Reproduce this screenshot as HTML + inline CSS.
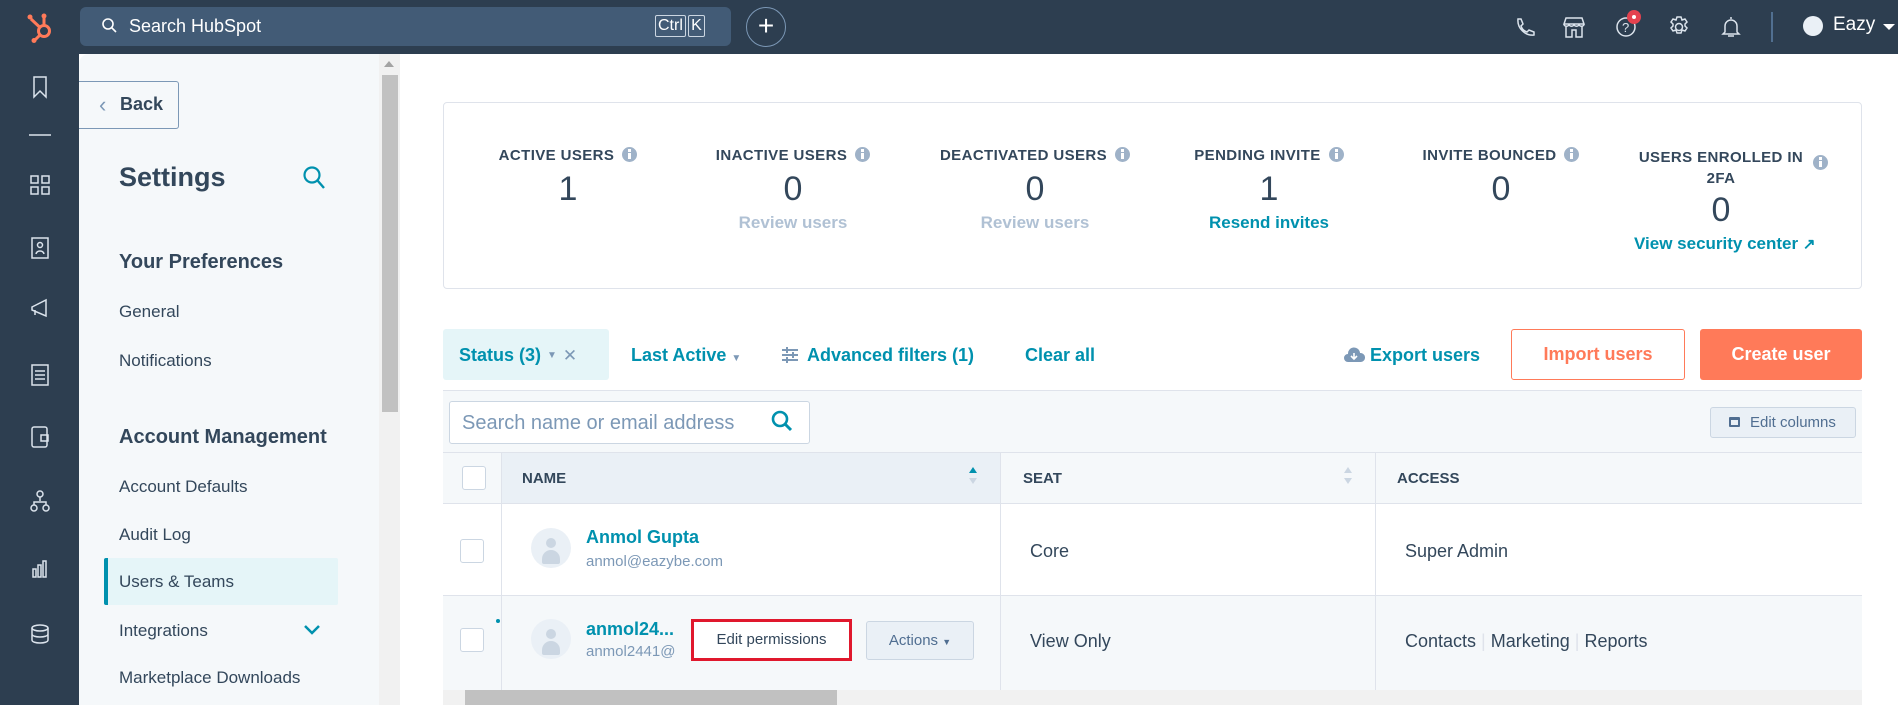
<!DOCTYPE html>
<html><head><meta charset="utf-8"><style>
*{box-sizing:border-box;margin:0;padding:0}
body{width:1898px;height:705px;overflow:hidden;background:#fff;font-family:"Liberation Sans",sans-serif;color:#33475b;position:relative}
.a{position:absolute}
.top{left:0;top:0;width:1898px;height:54px;background:#2d3e50}
.rail{left:0;top:54px;width:79px;height:651px;background:#2d3e50}
.teal{color:#0091ae}
.lbl{font-size:15px;font-weight:bold;letter-spacing:.4px;color:#33475b;white-space:nowrap}
.num{font-size:34px;color:#33475b}
.info{display:inline-block;width:15px;height:15px;border-radius:50%;background:#9fb2c8;vertical-align:-2px;margin-left:8px;position:relative}
.info:after{content:"";position:absolute;left:6px;top:6px;width:3px;height:6px;background:#fff}
.info:before{content:"";position:absolute;left:6px;top:2px;width:3px;height:3px;background:#fff}
.nav{font-size:17px;color:#33475b;left:119px}
.stat{text-align:center;width:240px}
.cb{width:24px;height:24px;border:1px solid #cbd6e2;border-radius:3px;background:#fff}
.av{width:40px;height:40px;border-radius:50%;background:#eaf0f6;overflow:hidden}
.av:before{content:"";position:absolute;left:15px;top:10px;width:10px;height:10px;border-radius:50%;background:#cbd6e2}
.av:after{content:"";position:absolute;left:11px;top:22px;width:18px;height:14px;border-radius:9px 9px 2px 2px;background:#cbd6e2}
.ic{stroke:#dbe3ec;fill:none;stroke-width:1.5}
.flt{font-size:18px;font-weight:bold;top:345px}
</style></head><body>
<div class="a top"></div>
<svg class="a" style="left:26px;top:11px" width="30" height="32" viewBox="0 0 30 32"><g stroke="#ff7a59" stroke-width="3" fill="none"><circle cx="18" cy="20" r="5.5"/><line x1="18" y1="14" x2="18" y2="7"/><line x1="13.5" y1="16" x2="5" y2="8"/><line x1="14" y1="24" x2="9" y2="29"/></g><circle cx="18" cy="5" r="2.5" fill="#ff7a59"/><circle cx="4" cy="6" r="2.5" fill="#ff7a59"/><circle cx="8" cy="29.5" r="2.5" fill="#ff7a59"/></svg>
<div class="a" style="left:80px;top:7px;width:651px;height:39px;background:#425b76;border-radius:6px"></div>
<svg class="a" style="left:101px;top:17px" width="18" height="18" viewBox="0 0 18 18"><circle cx="7" cy="7" r="5" stroke="#fff" stroke-width="1.6" fill="none"/><line x1="11" y1="11" x2="15" y2="15" stroke="#fff" stroke-width="1.6"/></svg>
<div class="a" style="left:129px;top:16px;font-size:18px;color:#fff">Search HubSpot</div>
<div class="a" style="left:655px;top:15px;height:22px;padding:0 2px;border:1px solid #cbd6e2;border-radius:2px;color:#fff;font-size:16px;line-height:20px">Ctrl</div>
<div class="a" style="left:688px;top:15px;height:22px;width:17px;border:1px solid #cbd6e2;border-radius:2px;color:#fff;font-size:16px;line-height:20px;text-align:center">K</div>
<div class="a" style="left:746px;top:7px;width:40px;height:40px;border:1px solid #7c98b6;border-radius:50%;color:#fff;font-size:28px;line-height:36px;text-align:center">+</div>
<svg class="a" style="left:1513px;top:16px" width="22" height="22" viewBox="0 0 22 22"><path class="ic" d="M5 3l3 0 2 5-2 2c1 3 3 5 6 6l2-2 5 2 0 3c-9 1-17-7-16-16z"/></svg>
<svg class="a" style="left:1563px;top:15px" width="22" height="24" viewBox="0 0 22 24"><path class="ic" d="M3 3h16l2 6H1zM1 9c0 3 5 3 5 0 0 3 5 3 5 0 0 3 5 3 5 0 0 3 5 3 5 0M3 11v11h6v-7h4v7h6V11"/></svg>
<svg class="a" style="left:1615px;top:16px" width="22" height="22" viewBox="0 0 22 22"><circle class="ic" cx="11" cy="11" r="9"/><text x="7" y="16" font-size="13" fill="#dbe3ec" font-family="Liberation Sans">?</text></svg>
<div class="a" style="left:1627px;top:10px;width:14px;height:14px;border-radius:50%;background:#e4424f"></div><div class="a" style="left:1632px;top:15px;width:4px;height:4px;border-radius:50%;background:#fff"></div>
<svg class="a" style="left:1668px;top:16px" width="22" height="22" viewBox="0 0 22 22"><circle class="ic" cx="11" cy="11" r="3.5"/><path class="ic" d="M9 1h4l1 3 3-1 2 3-2 2 0 2 2 2-2 3-3-1-1 3H9l-1-3-3 1-2-3 2-2 0-2-2-2 2-3 3 1z"/></svg>
<svg class="a" style="left:1720px;top:15px" width="22" height="24" viewBox="0 0 22 24"><path class="ic" d="M11 2v2M5 17V11a6 6 0 0112 0v6l2 2H3zM8 21h6"/></svg>
<div class="a" style="left:1771px;top:12px;width:2px;height:30px;background:#516f90"></div>
<div class="a" style="left:1803px;top:16px;width:20px;height:20px;border-radius:50%;background:#eaf0f6"></div>
<div class="a" style="left:1833px;top:14px;font-size:19px;color:#fff">Eazy</div>
<div class="a" style="left:1883px;top:24px;border:6px solid transparent;border-top:6px solid #fff"></div>
<div class="a rail"></div>
<svg class="a" style="left:27px;top:75px" width="26" height="600" viewBox="0 0 26 600"><g stroke="#dbe3ec" fill="none" stroke-width="1.5">
<path d="M7 2h12v20l-6-6-6 6z"/>
<line x1="2" y1="60" x2="24" y2="60"/>
<rect x="4" y="101" width="7" height="7"/><rect x="15" y="101" width="7" height="7"/><rect x="4" y="112" width="7" height="7"/><rect x="15" y="112" width="7" height="7"/>
<rect x="5" y="163" width="16" height="20"/><circle cx="13" cy="170" r="2.5"/><path d="M9 179c1-4 7-4 8 0"/>
<path d="M5 232l14-7v16l-14-6zM8 235v5"/>
<rect x="5" y="290" width="16" height="20"/><path d="M8 296h10M8 300h10M8 304h10"/>
<rect x="5" y="352" width="15" height="20" rx="2"/><path d="M14 360h7v6h-7z"/>
<circle cx="13" cy="419" r="3"/><circle cx="7" cy="433" r="3"/><circle cx="19" cy="433" r="3"/><path d="M13 422v4M7 430v-3h12v3"/>
<path d="M6 502v-8h3v8zM11 502v-12h3v12zM16 502v-16h3v16z"/>
<ellipse cx="13" cy="553" rx="8" ry="3"/><path d="M5 553v12c0 4 16 4 16 0V553M5 559c0 4 16 4 16 0"/>
<path d="M5 628v-10h6l2 3h8v7"/>
</g></svg>
<div class="a" style="left:79px;top:54px;width:300px;height:651px;background:#f5f8fa;border-radius:10px 0 0 0"></div>
<div class="a" style="left:379px;top:54px;width:21px;height:651px;background:#f1f1f1"></div>
<div class="a" style="left:382px;top:75px;width:16px;height:337px;background:#c1c1c1"></div>
<div class="a" style="left:384px;top:61px;border:5px solid transparent;border-bottom:6px solid #a3a3a3;border-top:0"></div>
<div class="a" style="left:79px;top:81px;width:100px;height:48px;border:1px solid #7c98b6;border-left:0;border-radius:0 3px 3px 0;background:#f5f8fa"></div>
<div class="a" style="left:99px;top:92px;font-size:22px;color:#7c98b6">&#8249;</div>
<div class="a" style="left:120px;top:94px;font-size:18px;font-weight:bold">Back</div>
<div class="a" style="left:119px;top:162px;font-size:27px;font-weight:bold">Settings</div>
<svg class="a" style="left:302px;top:165px" width="26" height="26" viewBox="0 0 26 26"><circle cx="10" cy="10" r="7.5" stroke="#0091ae" stroke-width="2.2" fill="none"/><line x1="15.5" y1="15.5" x2="22" y2="23" stroke="#0091ae" stroke-width="2.4"/></svg>
<div class="a" style="left:119px;top:251px;font-size:20px;font-weight:bold">Your Preferences</div>
<div class="a nav" style="top:302px">General</div>
<div class="a nav" style="top:351px">Notifications</div>
<div class="a" style="left:119px;top:426px;font-size:20px;font-weight:bold">Account Management</div>
<div class="a nav" style="top:477px">Account Defaults</div>
<div class="a nav" style="top:525px">Audit Log</div>
<div class="a" style="left:104px;top:558px;width:234px;height:47px;background:#e5f5f8;border-left:4px solid #0091ae;border-radius:2px"></div>
<div class="a nav" style="top:572px">Users &amp; Teams</div>
<div class="a nav" style="top:621px">Integrations</div>
<svg class="a" style="left:303px;top:624px" width="18" height="12" viewBox="0 0 18 12"><path d="M2 2l7 7 7-7" stroke="#0091ae" stroke-width="2.5" fill="none"/></svg>
<div class="a nav" style="top:668px">Marketplace Downloads</div>
<div class="a" style="left:443px;top:102px;width:1419px;height:187px;border:1px solid #dfe3eb;border-radius:4px"></div>
<div class="a stat" style="left:448px;top:147px"><div class="lbl">ACTIVE USERS<span class="info"></span></div><div class="num" style="margin-top:6px">1</div></div>
<div class="a stat" style="left:673px;top:147px"><div class="lbl">INACTIVE USERS<span class="info"></span></div><div class="num" style="margin-top:6px">0</div><div style="color:#b0c1d4;font-weight:bold;font-size:17px;margin-top:4px">Review users</div></div>
<div class="a stat" style="left:915px;top:147px"><div class="lbl">DEACTIVATED USERS<span class="info"></span></div><div class="num" style="margin-top:6px">0</div><div style="color:#b0c1d4;font-weight:bold;font-size:17px;margin-top:4px">Review users</div></div>
<div class="a stat" style="left:1149px;top:147px"><div class="lbl">PENDING INVITE<span class="info"></span></div><div class="num" style="margin-top:6px">1</div><div class="teal" style="font-weight:bold;font-size:17px;margin-top:4px">Resend invites</div></div>
<div class="a stat" style="left:1381px;top:147px"><div class="lbl">INVITE BOUNCED<span class="info"></span></div><div class="num" style="margin-top:6px">0</div></div>
<div class="a" style="left:1616px;top:147px;width:240px;text-align:center"><div class="lbl" style="line-height:21px;padding-right:30px">USERS ENROLLED IN<br>2FA</div><div class="num" style="margin-top:2px;padding-right:30px">0</div><div class="teal" style="font-weight:bold;font-size:17px;margin-top:4px;text-align:left;padding-left:18px">View security center <span style="font-size:15px">&#8599;</span></div></div>
<span class="a info" style="left:1813px;top:155px;margin:0"></span>
<div class="a" style="left:443px;top:329px;width:166px;height:51px;background:#e5f5f8;border-radius:3px"></div>
<div class="a teal flt" style="left:459px;display:flex;align-items:center;gap:6px">Status (3)<span style="font-size:10px;color:#7c98b6">&#9660;</span><span style="color:#7c98b6;font-weight:normal;font-size:17px;line-height:18px">&#10005;</span></div>
<div class="a teal flt" style="left:631px">Last Active <span style="font-size:10px;color:#7c98b6">&#9660;</span></div>
<svg class="a" style="left:781px;top:347px" width="18" height="16" viewBox="0 0 18 16"><g stroke="#7c98b6" stroke-width="2"><line x1="1" y1="3" x2="17" y2="3"/><line x1="1" y1="8" x2="17" y2="8"/><line x1="1" y1="13" x2="17" y2="13"/><line x1="6" y1="0" x2="6" y2="6"/><line x1="12" y1="5" x2="12" y2="11"/><line x1="6" y1="10" x2="6" y2="16"/></g></svg>
<div class="a teal flt" style="left:807px">Advanced filters (1)</div>
<div class="a teal flt" style="left:1025px">Clear all</div>
<svg class="a" style="left:1343px;top:347px" width="22" height="16" viewBox="0 0 22 16"><path d="M5 15a4 4 0 010-8 6 6 0 0112-1 4.5 4.5 0 011 9z" fill="#7c98b6"/><path d="M11 6v6M8 9l3 3 3-3" stroke="#fff" stroke-width="1.6" fill="none"/></svg>
<div class="a teal flt" style="left:1370px">Export users</div>
<div class="a" style="left:1511px;top:329px;width:174px;height:51px;border:1px solid #ff7a59;border-radius:3px;color:#ff7a59;font-size:18px;font-weight:bold;text-align:center;line-height:49px">Import users</div>
<div class="a" style="left:1700px;top:329px;width:162px;height:51px;background:#ff7a59;border-radius:3px;color:#fff;font-size:18px;font-weight:bold;text-align:center;line-height:51px">Create user</div>
<div class="a" style="left:443px;top:390px;width:1419px;height:62px;background:#f5f8fa;border-top:1px solid #dfe3eb"></div>
<div class="a" style="left:449px;top:401px;width:361px;height:43px;background:#fff;border:1px solid #cbd6e2;border-radius:3px"></div>
<div class="a" style="left:462px;top:412px;font-size:20px;color:#7c98b6">Search name or email address</div>
<svg class="a" style="left:770px;top:409px" width="24" height="24" viewBox="0 0 24 24"><circle cx="10" cy="10" r="7" stroke="#0091ae" stroke-width="2.6" fill="none"/><line x1="15" y1="15" x2="21" y2="21" stroke="#0091ae" stroke-width="3"/></svg>
<div class="a" style="left:1710px;top:407px;width:146px;height:31px;background:#eaf0f6;border:1px solid #cbd6e2;border-radius:3px;font-size:15px;line-height:29px;color:#506e91;padding-left:39px">Edit columns</div>
<div class="a" style="left:1729px;top:417px;width:11px;height:10px;border:2px solid #506e91;border-top-width:3px;border-radius:1px"></div>
<div class="a" style="left:443px;top:452px;width:1419px;height:52px;background:#f5f8fa;border-top:1px solid #dfe3eb;border-bottom:1px solid #dfe3eb"></div>
<div class="a" style="left:501px;top:453px;width:499px;height:50px;background:#eaf0f6"></div>
<div class="a cb" style="left:462px;top:466px"></div>
<div class="a" style="left:522px;top:470px;font-size:15px;font-weight:bold">NAME</div>
<div class="a" style="left:969px;top:467px;border:4px solid transparent;border-bottom:6px solid #0091ae;border-top:0"></div>
<div class="a" style="left:969px;top:478px;border:4px solid transparent;border-top:6px solid #cbd6e2;border-bottom:0"></div>
<div class="a" style="left:1023px;top:470px;font-size:15px;font-weight:bold">SEAT</div>
<div class="a" style="left:1344px;top:467px;border:4px solid transparent;border-bottom:6px solid #cbd6e2;border-top:0"></div>
<div class="a" style="left:1344px;top:478px;border:4px solid transparent;border-top:6px solid #cbd6e2;border-bottom:0"></div>
<div class="a" style="left:1397px;top:470px;font-size:15px;font-weight:bold">ACCESS</div>
<div class="a" style="left:443px;top:504px;width:1419px;height:92px;background:#fff;border-bottom:1px solid #dfe3eb"></div>
<div class="a" style="left:443px;top:596px;width:1419px;height:94px;background:#f5f8fa"></div>
<div class="a" style="left:501px;top:453px;width:1px;height:237px;background:#dfe3eb"></div>
<div class="a" style="left:1000px;top:453px;width:1px;height:237px;background:#dfe3eb"></div>
<div class="a" style="left:1375px;top:453px;width:1px;height:237px;background:#dfe3eb"></div>
<div class="a cb" style="left:460px;top:539px"></div>
<div class="a av" style="left:531px;top:528px"></div>
<div class="a teal" style="left:586px;top:527px;font-size:18px;font-weight:bold">Anmol Gupta</div>
<div class="a" style="left:586px;top:553px;font-size:15px;color:#7c98b6">anmol@eazybe.com</div>
<div class="a" style="left:1030px;top:541px;font-size:18px">Core</div>
<div class="a" style="left:1405px;top:541px;font-size:18px">Super Admin</div>
<div class="a" style="left:496px;top:619px;width:4px;height:4px;border-radius:50%;background:#0091ae"></div>
<div class="a cb" style="left:460px;top:628px"></div>
<div class="a av" style="left:531px;top:619px"></div>
<div class="a teal" style="left:586px;top:619px;font-size:18px;font-weight:bold">anmol24...</div>
<div class="a" style="left:586px;top:643px;font-size:15px;color:#7c98b6">anmol2441@</div>
<div class="a" style="left:691px;top:619px;width:161px;height:42px;border:3px solid #e0182d;background:#fff;font-size:15px;text-align:center;line-height:36px">Edit permissions</div>
<div class="a" style="left:866px;top:621px;width:108px;height:39px;background:#eaf0f6;border:1px solid #cbd6e2;border-radius:3px;font-size:15px;line-height:37px;text-align:center;color:#506e91">Actions <span style="font-size:9px">&#9660;</span></div>
<div class="a" style="left:1030px;top:631px;font-size:18px">View Only</div>
<div class="a" style="left:1405px;top:631px;font-size:18px">Contacts <span style="color:#dfe3eb">|</span> Marketing <span style="color:#dfe3eb">|</span> Reports</div>
<div class="a" style="left:443px;top:690px;width:1419px;height:15px;background:#f1f1f1"></div>
<div class="a" style="left:465px;top:690px;width:372px;height:15px;background:#c1c1c1"></div>
</body></html>
